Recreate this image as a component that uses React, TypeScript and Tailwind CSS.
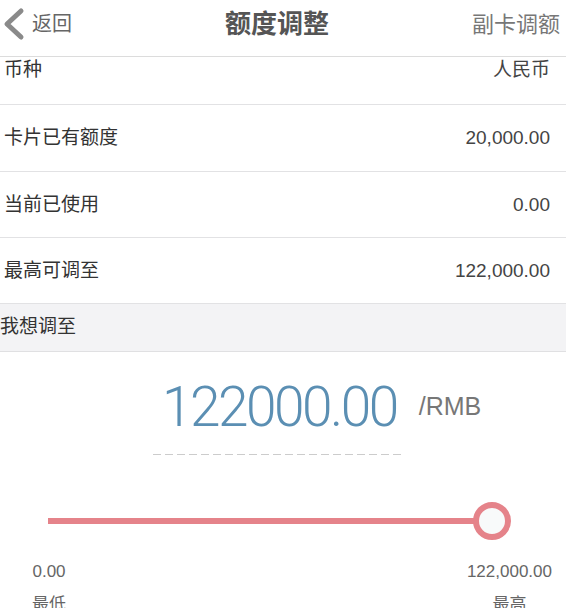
import React from "react";

const font = { fontFamily: '"Liberation Sans", "Noto Sans CJK SC", sans-serif' };

function Row({ label, value, h, top }: { label: string; value: string; h: string; top?: boolean }) {
  return (
    <div
      className={`flex justify-between border-b border-[#e2e2e4] pl-[4px] pr-[16px] text-[19px] leading-[20px] ${h} ${
        top ? "items-start pt-[3px]" : "items-center"
      }`}
    >
      <span className="text-[#333]">{label}</span>
      <span className="text-[#444]">{value}</span>
    </div>
  );
}

export default function App() {
  return (
    <div className="h-[608px] w-[566px] overflow-hidden bg-white" style={font}>
      {/* Header */}
      <div className="flex h-[57px] items-center border-b border-[#dcdcdc] pb-[8px]">
        <div className="flex flex-1 items-center">
          <svg width="24" height="34" viewBox="0 0 24 34" className="ml-[1px]">
            <polyline
              points="20,4 6,17 20,30"
              fill="none"
              stroke="#8a8a8a"
              strokeWidth="5"
              strokeLinecap="round"
              strokeLinejoin="round"
            />
          </svg>
          <span className="ml-[7px] text-[20px] text-[#666]">返回</span>
        </div>
        <div className="mr-[6px] text-[26px] font-semibold text-[#555]">额度调整</div>
        <div className="flex flex-1 justify-end pr-[6px] text-[22px] text-[#777]">副卡调额</div>
      </div>

      <Row label="币种" value="人民币" h="h-[48px]" top />
      <Row label="卡片已有额度" value="20,000.00" h="h-[67px]" />
      <Row label="当前已使用" value="0.00" h="h-[66px]" />
      <Row label="最高可调至" value="122,000.00" h="h-[66px]" />

      <div className="flex h-[48px] items-center border-b border-[#e0e0e2] bg-[#f3f3f5] text-[19px] text-[#333]">
        我想调至
      </div>

      {/* Amount */}
      <div className="mt-[28px] flex items-center gap-[22px] pl-[162px]">
        <span
          className="text-[55px] leading-[55px] font-light tracking-[-2.5px] text-[#5b8fb3]"
          style={{ fontFamily: "Roboto, sans-serif" }}
        >
          122000.00
        </span>
        <span className="mt-[-4px] text-[25px] leading-[26px] text-[#777]">/RMB</span>
      </div>
      <div className="ml-[153px] mt-[19px] h-px w-[249px] bg-[linear-gradient(to_right,#cccccc_65%,transparent_0)] bg-[length:12px_1px]" />

      {/* Slider */}
      <div className="relative ml-[48px] mt-[47px] h-[38px] w-[463px]">
        <div className="absolute left-0 right-[30px] top-[16px] h-[6px] bg-[#e5838a]" />
        <div className="absolute right-0 top-0 h-[38px] w-[38px] rounded-full border-[6px] border-[#e5838a] bg-[#f8fafa]" />
      </div>

      <div className="mt-[22px] flex justify-between pl-[32px] pr-[14px] text-[17px] leading-[20px] text-[#666]">
        <div className="flex flex-col items-center">
          <span>0.00</span>
          <span className="mt-[13px]">最低</span>
        </div>
        <div className="flex flex-col items-center">
          <span>122,000.00</span>
          <span className="mt-[13px]">最高</span>
        </div>
      </div>
    </div>
  );
}
